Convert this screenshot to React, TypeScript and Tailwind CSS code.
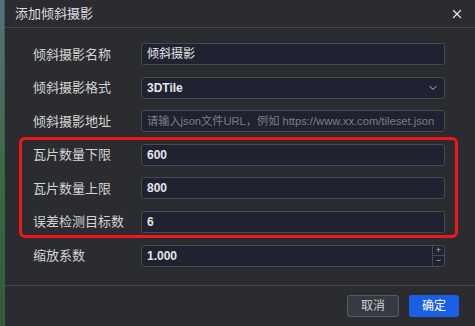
import { ChevronDown, X } from 'lucide-react';

const font = { fontFamily: '"Liberation Sans", "Noto Sans CJK SC", sans-serif' };

function Row({ label, children }: { label: string; children: React.ReactNode }) {
    return (
        <div className="flex items-center h-[22px]">
            <div className="w-[108px] text-[13px] text-[#d4d4d6] leading-none">{label}</div>
            {children}
        </div>
    );
}

function Field({ value, placeholder, bold = true }: { value?: string; placeholder?: string; bold?: boolean }) {
    return (
        <div className="w-[304px] h-[22px] flex items-center px-[5px] bg-[#1f2230] border border-[#474a53] rounded-[3px] text-[12px] leading-none">
            {value ? (
                <span className={bold ? 'text-[#e6e6e8] font-semibold' : 'text-[#e6e6e8]'}>{value}</span>
            ) : (
                <span className="text-[#7b7e86] text-[11.2px] whitespace-nowrap">{placeholder}</span>
            )}
        </div>
    );
}

export default function App() {
    return (
        <div className="relative w-[475px] h-[326px] flex bg-[#2b2c30] overflow-hidden" style={font}>
            {/* map peeking behind the dialog */}
            <div className="w-[4px] bg-gradient-to-b from-[#58707c] via-[#3d6b45] to-[#2e5a38]" />

            <div className="flex-1 flex flex-col border-l border-[#505257]">
                {/* Header */}
                <div className="h-[28px] flex items-center justify-between pl-[10px] pr-[11px] border-b border-[#46474d]">
                    <span className="text-[13px] text-[#dedee0]">添加倾斜摄影</span>
                    <X className="h-[14px] w-[14px] text-[#e4e4e4]" strokeWidth={2.2} />
                </div>

                {/* Body */}
                <div className="flex-1 flex flex-col gap-[11.6px] pt-[15px] pl-[28px]">
                    <Row label="倾斜摄影名称"><Field value="倾斜摄影" bold={false} /></Row>
                    <Row label="倾斜摄影格式">
                        <div className="w-[304px] h-[22px] flex items-center justify-between px-[5px] bg-[#1f2230] border border-[#474a53] rounded-[3px] text-[12px] leading-none">
                            <span className="text-[#e6e6e8] font-semibold">3DTile</span>
                            <ChevronDown className="h-[12px] w-[12px] text-[#c8c8cc]" strokeWidth={2} />
                        </div>
                    </Row>
                    <Row label="倾斜摄影地址"><Field placeholder="请输入json文件URL，例如 https://www.xx.com/tileset.json" /></Row>
                    <Row label="瓦片数量下限"><Field value="600" /></Row>
                    <Row label="瓦片数量上限"><Field value="800" /></Row>
                    <Row label="误差检测目标数"><Field value="6" /></Row>
                    <Row label="缩放系数">
                        <div className="w-[304px] h-[22px] flex bg-[#1f2230] border border-[#474a53] rounded-[3px] text-[12px] leading-none">
                            <div className="flex-1 flex items-center px-[5px]">
                                <span className="text-[#e6e6e8] font-semibold">1.000</span>
                            </div>
                            <div className="w-[12px] flex flex-col border-l border-[#474a53] text-[#b8b8bc]">
                                <div className="flex-1 flex items-center justify-center border-b border-[#474a53] text-[9px]">+</div>
                                <div className="flex-1 flex items-center justify-center text-[9px]">−</div>
                            </div>
                        </div>
                    </Row>
                </div>

                {/* Footer */}
                <div className="h-[41px] flex items-center justify-end gap-[10px] pr-[16px] border-t border-[#46474d]">
                    <button className="w-[52px] h-[22px] bg-[#363a44] border border-[#575b64] rounded-[3px] text-[12px] text-[#d0d0d2]">取消</button>
                    <button className="w-[50px] h-[22px] bg-[#1a60e4] rounded-[3px] text-[12px] text-white">确定</button>
                </div>
            </div>

            {/* red annotation box */}
            <div className="absolute left-[19px] top-[137px] w-[439px] h-[101px] border-[3px] border-[#f01818] rounded-[6px]" />
        </div>
    );
}
